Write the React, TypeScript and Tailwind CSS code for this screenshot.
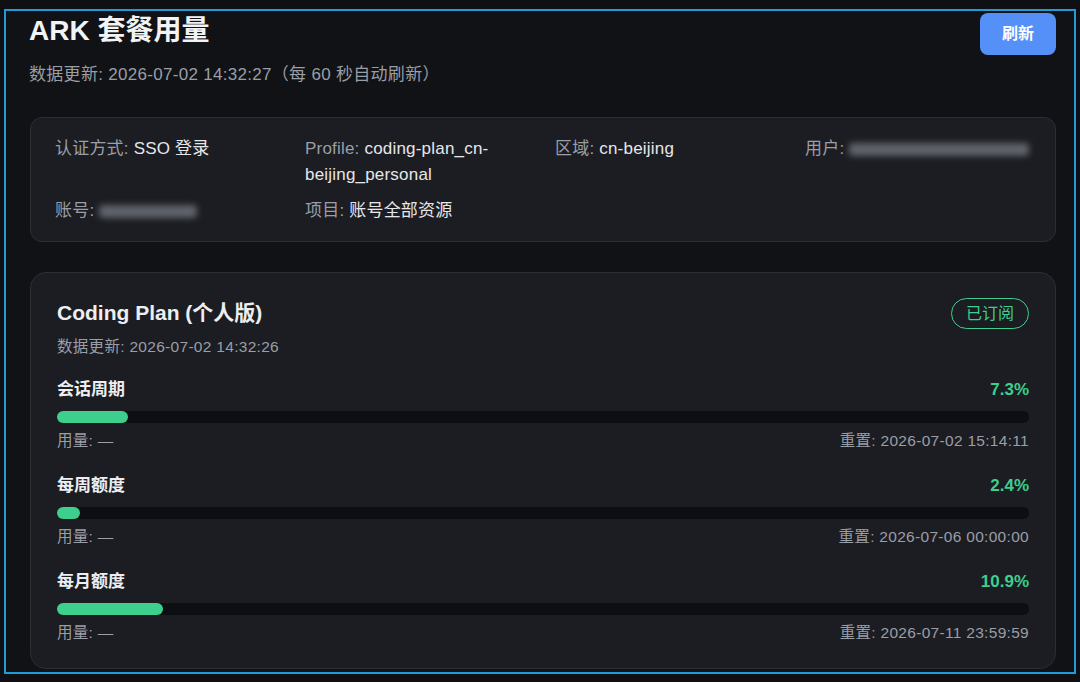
import React from "react";

const font = {
  fontFamily: '"Liberation Sans", "Noto Sans CJK SC", sans-serif',
};

type Quota = {
  name: string;
  percent: number;
  used: string;
  reset: string;
};

const quotas: Quota[] = [
  { name: "会话周期", percent: 7.3, used: "—", reset: "2026-07-02 15:14:11" },
  { name: "每周额度", percent: 2.4, used: "—", reset: "2026-07-06 00:00:00" },
  { name: "每月额度", percent: 10.9, used: "—", reset: "2026-07-11 23:59:59" },
];

function Blur({ w }: { w: string }) {
  return (
    <span className={`inline-block align-middle h-[13px] ${w} rounded-sm bg-[#70747d] blur-[3px] opacity-80`} />
  );
}

function InfoItem({ label, children }: { label: string; children: React.ReactNode }) {
  return (
    <div className="text-[17px] leading-[26px] tracking-[0.2px]">
      <span className="text-[#9a9ea6]">{label}: </span>
      <span className="text-[#e6e7ea]">{children}</span>
    </div>
  );
}

function QuotaRow({ q }: { q: Quota }) {
  return (
    <div className="mb-[23px] last:mb-0">
      <div className="flex justify-between items-center text-[17px] leading-[24px] font-bold">
        <span className="text-[#eceef1]">{q.name}</span>
        <span className="text-[#3ecf8e]">{q.percent}%</span>
      </div>
      <div className="mt-[9px] h-[12px] rounded-full bg-[#0c0e11]">
        <div className="h-full rounded-full bg-[#3ecf8e]" style={{ width: `${q.percent}%` }} />
      </div>
      <div className="mt-[8px] flex justify-between text-[15.5px] leading-[20px] tracking-[0.3px] text-[#9a9ea6]">
        <span>用量: {q.used}</span>
        <span>重置: {q.reset}</span>
      </div>
    </div>
  );
}

export default function App() {
  return (
    <div style={font} className="w-[1080px] h-[682px] bg-[#0e1013] pt-[9px] px-[4px] overflow-hidden">
      <div className="h-[665px] border-2 border-[#1f9bd8] bg-[#101216] pl-[23px] pr-[18px]">
        <div className="flex justify-between items-start">
          <div>
            <h1 className="text-[28px] leading-[36px] font-bold text-[#f2f3f5] mt-[2px]">ARK 套餐用量</h1>
            <p className="mt-[14px] text-[17px] leading-[24px] tracking-[0.3px] text-[#9a9ea6]">
              数据更新: 2026-07-02 14:32:27（每 60 秒自动刷新）
            </p>
          </div>
          <button className="mt-[2px] w-[76px] h-[42px] rounded-lg bg-[#5590f8] text-white text-[16px] font-bold">
            刷新
          </button>
        </div>

        <div className="mt-[30px] ml-[1px] rounded-xl border border-[#2b2e35] bg-[#1b1d22] px-[24px] pt-[18px] pb-[17px]">
          <div className="grid grid-cols-4 gap-x-[24px] gap-y-[10px]">
            <InfoItem label="认证方式">SSO 登录</InfoItem>
            <InfoItem label="Profile">coding-plan_cn-beijing_personal</InfoItem>
            <InfoItem label="区域">cn-beijing</InfoItem>
            <InfoItem label="用户">
              <Blur w="w-[180px]" />
            </InfoItem>
            <InfoItem label="账号">
              <Blur w="w-[98px]" />
            </InfoItem>
            <InfoItem label="项目">账号全部资源</InfoItem>
          </div>
        </div>

        <div className="mt-[30px] ml-[1px] rounded-2xl border border-[#2b2e35] bg-[#1b1d22] px-[26px] pt-[26px] pb-[25px]">
          <div className="flex justify-between items-start">
            <div>
              <h2 className="text-[21px] leading-[28px] font-bold text-[#eceef1]">Coding Plan (个人版)</h2>
              <p className="mt-[10px] text-[15.5px] leading-[20px] tracking-[0.3px] text-[#9a9ea6]">
                数据更新: 2026-07-02 14:32:26
              </p>
            </div>
            <span className="mt-[-1px] inline-flex items-center h-[31px] px-[14px] rounded-full border border-[#3ecf8e] text-[#3ecf8e] text-[16px]">
              已订阅
            </span>
          </div>
          <div className="mt-[21px]">
            {quotas.map((q) => (
              <QuotaRow key={q.name} q={q} />
            ))}
          </div>
        </div>
      </div>
    </div>
  );
}
